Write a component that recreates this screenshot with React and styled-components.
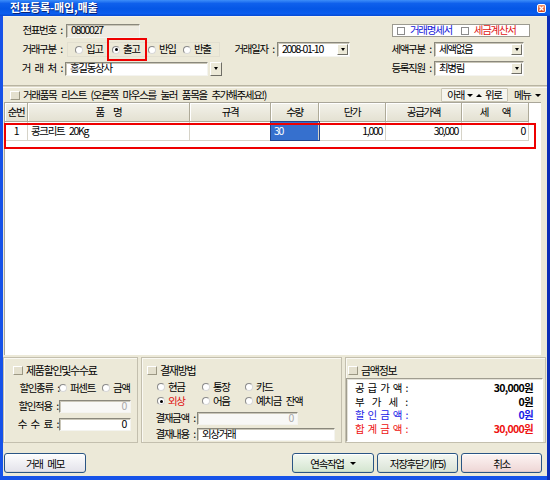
import React from "react";
import styled, { createGlobalStyle } from "styled-components";

const GlobalStyle = createGlobalStyle`
  html, body { margin: 0; padding: 0; background: #fff; }
  body {
    font-family: "Noto Sans CJK KR", "Noto Sans", sans-serif;
    font-size: 10.5px;
    letter-spacing: -1.3px;
    word-spacing: 3.5px;
    line-height: 1.2;
    color: #000;
  }
  *, *::before, *::after { box-sizing: border-box; }
`;

const Window = styled.div`
  width: 550px;
  height: 480px;
  display: flex;
  flex-direction: column;
  overflow: hidden;
  background: linear-gradient(to right, #1652E8 0, #1652E8 547px, #0B2DB6 547px);
`;

const TitleBar = styled.div`
  height: 16px;
  flex: none;
  display: flex;
  align-items: center;
  justify-content: space-between;
  padding: 0 4px 0 10px;
  background: linear-gradient(to bottom, #3D8EF9 0%, #0F60EC 22%, #0557E6 55%, #0A5DEE 85%, #064AD3 100%);
  color: #fff;
  font-size: 11px;
  font-weight: bold;
  letter-spacing: -0.1px;
  word-spacing: 0;
  text-shadow: 1px 1px 0 #0A2478;
`;

const CloseBox = styled.div`
  width: 9px;
  height: 9px;
  border: 1px solid #fff;
  border-radius: 2px;
  background: linear-gradient(#F2936A, #D7461E);
  display: flex;
  align-items: center;
  justify-content: center;
`;

const Body = styled.div`
  flex: 1;
  margin: 0 3px 4px 3px;
  background: #ECE9D8;
  display: flex;
  flex-direction: column;
  border-top: 1px solid #F4F2E8;
`;

/* ---------- header ---------- */
const Header = styled.div`
  height: 68px;
  flex: none;
  padding-top: 6px;
  display: flex;
  flex-direction: column;
  gap: 4px;
`;

const HeaderRow = styled.div`
  display: flex;
  align-items: center;
  height: 15px;
`;

const Label = styled.span`
  flex: none;
  width: ${(p) => p.$w}px;
  text-align: right;
  padding-right: ${(p) => (p.$pr ?? 3)}px;
  white-space: pre;
  color: ${(p) => p.$color || "#000"};
`;

const Spacer = styled.span`
  flex: none;
  width: ${(p) => p.$w}px;
`;

const Field = styled.div`
  flex: none;
  position: relative;
  width: ${(p) => p.$w}px;
  height: ${(p) => p.$h || 14}px;
  margin-left: ${(p) => p.$ml || 0}px;
  background: ${(p) => p.$bg || "#fff"};
  border: 1px solid;
  border-color: #8A887C #F4F4F0 #F4F4F0 #8A887C;
  box-shadow: inset 1px 1px 0 #C9C6B8;
  display: flex;
  align-items: center;
  justify-content: ${(p) => (p.$right ? "flex-end" : "flex-start")};
  padding: 0 ${(p) => (p.$right ? 4 : 3)}px 0 4px;
  color: ${(p) => p.$color || "#000"};
  line-height: 1;
  white-space: nowrap;
`;

const FieldText = styled.span`
  flex: 1;
  text-align: ${(p) => (p.$right ? "right" : "left")};
`;

const DropButton = styled.span`
  flex: none;
  width: ${(p) => p.$w || 11}px;
  height: ${(p) => (p.$h ? `${p.$h}px` : "100%")};
  margin-left: ${(p) => p.$ml || 0}px;
  background: #ECE9D8;
  border: 1px solid;
  border-color: #FFFFFF #6F6E66 #6F6E66 #FFFFFF;
  display: flex;
  align-items: center;
  justify-content: center;
`;

const Tri = styled.span`
  display: inline-block;
  width: 0;
  height: 0;
  border-left: ${(p) => p.$s || 3}px solid transparent;
  border-right: ${(p) => p.$s || 3}px solid transparent;
  ${(p) =>
    p.$up
      ? `border-bottom: ${p.$h || 3}px solid ${p.$c || "#000"};`
      : `border-top: ${p.$h || 3}px solid ${p.$c || "#000"};`}
`;

const CheckPanel = styled.div`
  margin-left: auto;
  margin-right: 17px;
  width: 138px;
  height: 13px;
  background: #fff;
  border: 1px solid #9C9A90;
  display: flex;
  align-items: center;
  padding-left: 4px;
  gap: 9px;
`;

const CheckItem = styled.span`
  display: flex;
  align-items: center;
  gap: 5px;
  color: ${(p) => p.$color};
`;

const CheckBox = styled.span`
  width: 8px;
  height: 8px;
  background: #fff;
  border: 1px solid #8C8C8C;
  flex: none;
`;

const RadioGroup = styled.div`
  position: relative;
  flex: none;
  margin-left: 2px;
  width: 153px;
  height: 15px;
  border: 1px solid #E2DFD0;
  display: grid;
  grid-template-columns: 37px 36px 35px auto;
  align-items: center;
  padding-left: 7px;
`;

const RadioItem = styled.span`
  display: flex;
  align-items: center;
  gap: 3px;
  white-space: nowrap;
  color: ${(p) => p.$color || "#000"};
`;

const RadioDot = styled.span`
  flex: none;
  position: relative;
  width: 8px;
  height: 8px;
  border-radius: 50%;
  background: #fff;
  border: 1px solid;
  border-color: #8A8A8A #D8D8D8 #D8D8D8 #8A8A8A;
  &::after {
    content: "";
    display: ${(p) => (p.$on ? "block" : "none")};
    position: absolute;
    left: 1.5px;
    top: 1.5px;
    width: 3px;
    height: 3px;
    border-radius: 50%;
    background: #000;
  }
`;

const Highlight = styled.span`
  position: absolute;
  left: ${(p) => p.$l}px;
  top: ${(p) => p.$t}px;
  width: ${(p) => p.$w}px;
  height: ${(p) => p.$h}px;
  border: 2px solid #EE0000;
  pointer-events: none;
`;

/* ---------- list ---------- */
const Separator = styled.div`
  height: 3px;
  flex: none;
  border-top: 1px solid #B8B4A2;
  border-bottom: 1px solid #FAF9F4;
  background: #D9D5C4;
`;

const ListBar = styled.div`
  height: 14px;
  flex: none;
  display: flex;
  align-items: center;
  padding-left: 7px;
  padding-right: 2px;
`;

const SquareIcon = styled.span`
  flex: none;
  width: 10px;
  height: 9px;
  background: #E4E0CE;
  border: 1px solid;
  border-color: #FFFFFF #9C9884 #9C9884 #FFFFFF;
  margin-right: 3px;
`;

const BarButton = styled.span`
  margin-left: auto;
  height: 14px;
  width: 67px;
  display: flex;
  align-items: center;
  justify-content: center;
  gap: 3px;
  word-spacing: 0;
  background: #F6F5EE;
  border: 1px solid #CAC6B4;
  border-radius: 1px;
`;

const MenuLabel = styled.span`
  display: flex;
  align-items: center;
  gap: 4px;
  margin-left: 6px;
  width: 31px;
`;

const Grid = styled.div`
  position: relative;
  flex: none;
  height: 253px;
  margin: 0 6px 0 1px;
  background: #fff;
  border-left: 1px solid #A9A699;
  border-top: 1px solid #A9A699;
`;

const GridRow = styled.div`
  display: flex;
  height: ${(p) => p.$h}px;
  border-bottom: ${(p) => (p.$line ? "1px solid #D6D3C8" : "none")};
  width: ${(p) => (p.$line ? "524px" : "auto")};
`;

const HeadCell = styled.div`
  flex: none;
  width: ${(p) => p.$w}px;
  background: linear-gradient(#F3F2EA, #E4E1D2);
  border-right: 1px solid #AEAA98;
  border-bottom: 1px solid #AEAA98;
  box-shadow: inset 1px 1px 0 #FFFFFF;
  display: flex;
  align-items: center;
  justify-content: center;
  white-space: pre;
`;

const Cell = styled.div`
  flex: none;
  width: ${(p) => p.$w}px;
  border-right: 1px solid #D6D3C8;
  display: flex;
  align-items: center;
  justify-content: ${(p) =>
    p.$align === "right" ? "flex-end" : p.$align === "center" ? "center" : "flex-start"};
  padding: 0 3px;
  white-space: nowrap;
  background: ${(p) => (p.$sel ? "#3670CE" : "transparent")};
  color: ${(p) => (p.$sel ? "#fff" : "#000")};
  outline: ${(p) => (p.$sel ? "1px solid #23468A" : "none")};
`;

/* ---------- bottom panels ---------- */
const Panels = styled.div`
  flex: none;
  margin-top: 2px;
  height: 86px;
  display: grid;
  grid-template-columns: 135px 201px 201px;
  column-gap: 3px;
`;

const Panel = styled.div`
  border: 1px solid #C3BFAE;
  box-shadow: inset 1px 1px 0 #FAF9F3;
  padding: 6px 0 0 ${(p) => p.$pl}px;
  display: flex;
  flex-direction: column;
`;

const PanelHead = styled.div`
  height: 13px;
  display: flex;
  align-items: center;
  padding-left: ${(p) => p.$pl || 0}px;
  font-size: 11px;
`;

const PanelRow = styled.div`
  display: flex;
  align-items: center;
  height: ${(p) => p.$h || 13}px;
  margin-top: ${(p) => p.$mt}px;
`;

const PayGrid = styled.div`
  margin-top: 4px;
  padding-left: 10px;
  display: grid;
  grid-template-columns: 45px 43px auto;
  grid-auto-rows: 12px;
  row-gap: 2px;
  align-items: center;
`;

const MoneyBox = styled.div`
  margin-top: 1px;
  width: 197px;
  height: 64px;
  background: #fff;
  border: 1px solid;
  border-color: #A09D90 #FFFFFF #FFFFFF #A09D90;
  box-shadow: inset 1px 1px 0 #E4E2D8;
  padding: 3px 9px 0 8px;
  display: grid;
  grid-auto-rows: 13.5px;
`;

const MoneyRow = styled.div`
  display: flex;
  align-items: center;
  justify-content: space-between;
  color: ${(p) => p.$color};
`;

const SpreadLabel = styled.span`
  width: 52px;
  display: flex;
  justify-content: space-between;
`;

const MoneyValue = styled.span`
  font-weight: bold;
  letter-spacing: -0.7px;
`;

/* ---------- buttons ---------- */
const ButtonBar = styled.div`
  flex: none;
  margin-top: 10px;
  height: 20px;
  display: flex;
  padding: 0 5px 0 1px;
`;

const ButtonGroup = styled.div`
  margin-left: auto;
  display: flex;
  gap: 3px;
`;

const tones = {
  plain: ["#FDFDFE", "#E3E2EA"],
  green: ["#F4F9F2", "#D3E5CF"],
  sage: ["#F5F8F3", "#D9E3D6"],
  pink: ["#FDF5F4", "#EED6D5"],
};

const XPButton = styled.button`
  width: ${(p) => p.$w}px;
  height: 20px;
  border: 1px solid #2A5584;
  border-radius: 3px;
  background: linear-gradient(${(p) => tones[p.$tone][0]}, ${(p) => tones[p.$tone][1]});
  box-shadow: inset 0 -1px 0 rgba(0, 0, 0, 0.06), inset 0 1px 0 #fff;
  font-family: inherit;
  font-size: 10.5px;
  letter-spacing: -1.3px;
  word-spacing: 3.5px;
  color: #000;
  display: flex;
  align-items: center;
  justify-content: center;
  gap: 6px;
  padding: 0;
`;

const Radio = ({ on, children, color }) => (
  <RadioItem $color={color}>
    <RadioDot $on={on} />
    {children}
  </RadioItem>
);

const columns = [
  { k: "순번", w: 23 },
  { k: "품  명", w: 162 },
  { k: "규격", w: 81 },
  { k: "수량", w: 48 },
  { k: "단가", w: 67 },
  { k: "공급가액", w: 76 },
  { k: "세   액", w: 67 },
];

const row = [
  { v: "1", align: "center" },
  { v: "콩크리트 20Kg" },
  { v: "" },
  { v: "30", sel: true },
  { v: "1,000", align: "right" },
  { v: "30,000", align: "right" },
  { v: "0", align: "right" },
];

const money = [
  { l: "공급가액:", v: "30,000원", c: "#000" },
  { l: "부가세:", v: "0원", c: "#000" },
  { l: "할인금액:", v: "0원", c: "#1A1AE6" },
  { l: "합계금액:", v: "30,000원", c: "#EE1111" },
];

export default function App() {
  return (
    <>
      <GlobalStyle />
      <Window>
        <TitleBar>
          <span>전표등록-매입,매출</span>
          <CloseBox>
            <svg width="5" height="5" viewBox="0 0 5 5">
              <path d="M0.5 0.5 L4.5 4.5 M4.5 0.5 L0.5 4.5" stroke="#fff" strokeWidth="1.2" />
            </svg>
          </CloseBox>
        </TitleBar>
        <Body>
          <Header>
            <HeaderRow>
              <Label $w={62}>전표번호 :</Label>
              <Field $w={74} $ml={1} $bg="#EEECE2">0800027</Field>
              <CheckPanel>
                <CheckItem $color="#1515D8"><CheckBox />거래명세서</CheckItem>
                <CheckItem $color="#E01515"><CheckBox />세금계산서</CheckItem>
              </CheckPanel>
            </HeaderRow>
            <HeaderRow>
              <Label $w={62}>거래구분 :</Label>
              <RadioGroup>
                <Radio>입고</Radio>
                <Radio on>출고</Radio>
                <Radio>반입</Radio>
                <Radio>반출</Radio>
                <Highlight $l={39} $t={-5} $w={40} $h={23} />
              </RadioGroup>
              <Label $w={57}>거래일자 :</Label>
              <Field $w={73} $h={15} style={{ paddingRight: 1 }}>
                <FieldText>2008-01-10</FieldText>
                <DropButton $h={11}><Tri $s={2.5} /></DropButton>
              </Field>
              <Label $w={84}>세액구분 :</Label>
              <Field $w={90} $h={15} style={{ paddingRight: 1 }}>
                <FieldText>세액없음</FieldText>
                <DropButton $h={11}><Tri $s={2.5} /></DropButton>
              </Field>
            </HeaderRow>
            <HeaderRow>
              <Label $w={62}>{"거 래 처 :"}</Label>
              <Field $w={143}>홍길동상사</Field>
              <DropButton $w={12} $h={14} $ml={2}><Tri $s={2.5} /></DropButton>
              <Spacer $w={128} />
              <Label $w={84}>등록직원 :</Label>
              <Field $w={90} $h={15} style={{ paddingRight: 1 }}>
                <FieldText>최병림</FieldText>
                <DropButton $h={11}><Tri $s={2.5} /></DropButton>
              </Field>
            </HeaderRow>
          </Header>

          <Separator />
          <ListBar>
            <SquareIcon />
            <span>거래품목 리스트 (오른쪽 마우스를 눌러 품목을 추가해주세요!)</span>
            <BarButton>
              아래 <Tri $s={3} /> <Tri $s={3} $up /> 위로
            </BarButton>
            <MenuLabel>메뉴 <Tri $s={3} /></MenuLabel>
          </ListBar>

          <Grid>
            <GridRow $h={19}>
              {columns.map((c) => (
                <HeadCell key={c.k} $w={c.w}>{c.k}</HeadCell>
              ))}
            </GridRow>
            <GridRow $h={19} $line>
              {row.map((r, i) => (
                <Cell key={i} $w={columns[i].w} $align={r.align} $sel={r.sel}>
                  {r.v}
                </Cell>
              ))}
            </GridRow>
            <Highlight $l={-1} $t={20} $w={532} $h={26} />
          </Grid>

          <Panels>
            <Panel $pl={9}>
              <PanelHead><SquareIcon />제품할인및수수료</PanelHead>
              <PanelRow $mt={5} $h={12}>
                <Label $w={46} $pr={0}>할인종류 :</Label>
                <span style={{ width: 43, display: "flex" }}><Radio>퍼센트</Radio></span>
                <Radio>금액</Radio>
              </PanelRow>
              <PanelRow $mt={6}>
                <Label $w={46} $pr={1}>할인적용 :</Label>
                <Field $w={72} $h={13} $bg="#F8F8F6" $right $color="#A8A8A8">0</Field>
              </PanelRow>
              <PanelRow $mt={5}>
                <Label $w={46} $pr={1}>{"수 수 료 :"}</Label>
                <Field $w={72} $h={13} $right>0</Field>
              </PanelRow>
            </Panel>

            <Panel $pl={5}>
              <PanelHead><SquareIcon />결재방법</PanelHead>
              <PayGrid>
                <Radio>현금</Radio>
                <Radio>통장</Radio>
                <Radio>카드</Radio>
                <Radio on color="#E01010">외상</Radio>
                <Radio>어음</Radio>
                <Radio>예치금 잔액</Radio>
              </PayGrid>
              <PanelRow $mt={5}>
                <Label $w={50} $pr={2}>결재금액 :</Label>
                <Field $w={101} $h={13} $bg="#F8F8F6" $right $color="#A8A8A8">0</Field>
              </PanelRow>
              <PanelRow $mt={3}>
                <Label $w={50} $pr={2}>결재내용 :</Label>
                <Field $w={138} $h={13}>외상거래</Field>
              </PanelRow>
            </Panel>

            <Panel $pl={0}>
              <PanelHead $pl={2}><SquareIcon />금액정보</PanelHead>
              <MoneyBox>
                {money.map((m) => (
                  <MoneyRow key={m.l} $color={m.c}>
                    <SpreadLabel>
                      {Array.from(m.l).map((ch, i) => (
                        <span key={i}>{ch}</span>
                      ))}
                    </SpreadLabel>
                    <MoneyValue>{m.v}</MoneyValue>
                  </MoneyRow>
                ))}
              </MoneyBox>
            </Panel>
          </Panels>

          <ButtonBar>
            <XPButton $w={82} $tone="plain">거래 메모</XPButton>
            <ButtonGroup>
              <XPButton $w={82} $tone="green">연속작업 <Tri $s={3} /></XPButton>
              <XPButton $w={81} $tone="sage">저장후닫기(F5)</XPButton>
              <XPButton $w={81} $tone="pink">취소</XPButton>
            </ButtonGroup>
          </ButtonBar>
        </Body>
      </Window>
    </>
  );
}
